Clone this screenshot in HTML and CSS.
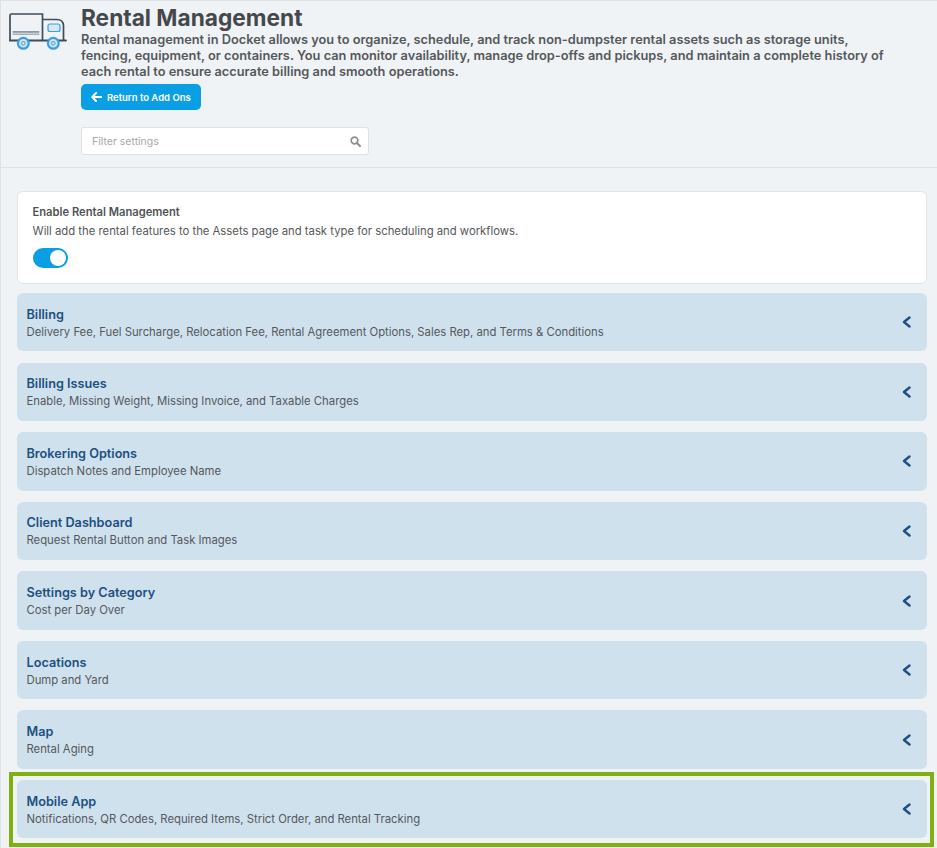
FILE: index.html
```html
<!DOCTYPE html>
<html lang="en">

<head>
  <meta charset="UTF-8" />
  <meta name="viewport" content="width=device-width, initial-scale=1.0" />
  <title>Rental Management</title>
  <link rel="stylesheet" href="styles.css">
</head>

<body>
  <header class="page-header">
    <svg class="truck-icon" width="58" height="40" viewBox="0 0 58 40" fill="none">
      <path d="M1 27V2.500a1.500 1.500 0 0 1 1.500-1.500H33.500V27" stroke="#3f4d5c" stroke-width="1.700" />
      <rect x="3.700" y="18" width="26.600" height="1.800" fill="#8b98a5" />
      <rect x="3.700" y="20.500" width="26.600" height="1.500" fill="#a3aeb8" />
      <path d="M0.500 27.500H57" stroke="#3f4d5c" stroke-width="1.800" stroke-linecap="round" />
      <path d="M33.500 6.500H48q6 0 6.500 6V27" stroke="#3f4d5c" stroke-width="1.700" />
      <rect x="39" y="11" width="12" height="7.500" rx="2" fill="#d5e9f8" stroke="#3b9fe0" stroke-width="1.200" />
      <circle cx="14.300" cy="30.300" r="5.400" fill="#cfe5f5" stroke="#3b9fe0" stroke-width="2.200" />
      <circle cx="14.300" cy="30.300" r="1.800" fill="none" stroke="#3b9fe0" stroke-width="1" />
      <circle cx="44.300" cy="30.300" r="5.400" fill="#cfe5f5" stroke="#3b9fe0" stroke-width="2.200" />
      <circle cx="44.300" cy="30.300" r="1.800" fill="none" stroke="#3b9fe0" stroke-width="1" />
    </svg>
    <div class="header-body">
      <h1>Rental Management</h1>
      <p class="intro">Rental management in Docket allows you to organize, schedule, and track non-dumpster rental assets such as storage units, fencing, equipment, or containers. You can monitor availability, manage drop-offs and pickups, and maintain a complete history of each rental to ensure accurate billing and smooth operations.</p>
      <a class="back-btn" href="#">
        <svg width="11" height="10" viewBox="0 0 11 10" fill="none">
          <path d="M5 1 1.300 5 5 9M1.500 5H10.500" stroke="#fff" stroke-width="2" stroke-linecap="round" stroke-linejoin="round" />
        </svg>
        Return to Add Ons
      </a>
      <div class="filter">
        <input type="text" placeholder="Filter settings" />
        <svg width="11" height="11" viewBox="0 0 11 11" fill="none">
          <circle cx="4.500" cy="4.500" r="3.300" stroke="#8a8f94" stroke-width="1.700" />
          <path d="M7 7 10 10" stroke="#8a8f94" stroke-width="2" stroke-linecap="round" />
        </svg>
      </div>
    </div>
  </header>

  <main class="settings">
    <section class="enable-card">
      <h2>Enable Rental Management</h2>
      <p>Will add the rental features to the Assets page and task type for scheduling and workflows.</p>
      <span class="toggle"><span class="knob"></span></span>
    </section>

    <div class="row">
      <div>
        <h3>Billing</h3>
        <p>Delivery Fee, Fuel Surcharge, Relocation Fee, Rental Agreement Options, Sales Rep, and Terms &amp; Conditions</p>
      </div>
      <svg class="chevron" width="9" height="12" viewBox="0 0 9 12" fill="none"><path d="M7.500 1.500 2 6l5.500 4.500" stroke="#1d5080" stroke-width="2.400" stroke-linecap="round" stroke-linejoin="round" /></svg>
    </div>
    <div class="row">
      <div>
        <h3>Billing Issues</h3>
        <p>Enable, Missing Weight, Missing Invoice, and Taxable Charges</p>
      </div>
      <svg class="chevron" width="9" height="12" viewBox="0 0 9 12" fill="none"><path d="M7.500 1.500 2 6l5.500 4.500" stroke="#1d5080" stroke-width="2.400" stroke-linecap="round" stroke-linejoin="round" /></svg>
    </div>
    <div class="row">
      <div>
        <h3>Brokering Options</h3>
        <p>Dispatch Notes and Employee Name</p>
      </div>
      <svg class="chevron" width="9" height="12" viewBox="0 0 9 12" fill="none"><path d="M7.500 1.500 2 6l5.500 4.500" stroke="#1d5080" stroke-width="2.400" stroke-linecap="round" stroke-linejoin="round" /></svg>
    </div>
    <div class="row">
      <div>
        <h3>Client Dashboard</h3>
        <p>Request Rental Button and Task Images</p>
      </div>
      <svg class="chevron" width="9" height="12" viewBox="0 0 9 12" fill="none"><path d="M7.500 1.500 2 6l5.500 4.500" stroke="#1d5080" stroke-width="2.400" stroke-linecap="round" stroke-linejoin="round" /></svg>
    </div>
    <div class="row">
      <div>
        <h3>Settings by Category</h3>
        <p>Cost per Day Over</p>
      </div>
      <svg class="chevron" width="9" height="12" viewBox="0 0 9 12" fill="none"><path d="M7.500 1.500 2 6l5.500 4.500" stroke="#1d5080" stroke-width="2.400" stroke-linecap="round" stroke-linejoin="round" /></svg>
    </div>
    <div class="row">
      <div>
        <h3>Locations</h3>
        <p>Dump and Yard</p>
      </div>
      <svg class="chevron" width="9" height="12" viewBox="0 0 9 12" fill="none"><path d="M7.500 1.500 2 6l5.500 4.500" stroke="#1d5080" stroke-width="2.400" stroke-linecap="round" stroke-linejoin="round" /></svg>
    </div>
    <div class="row">
      <div>
        <h3>Map</h3>
        <p>Rental Aging</p>
      </div>
      <svg class="chevron" width="9" height="12" viewBox="0 0 9 12" fill="none"><path d="M7.500 1.500 2 6l5.500 4.500" stroke="#1d5080" stroke-width="2.400" stroke-linecap="round" stroke-linejoin="round" /></svg>
    </div>
    <div class="row highlighted">
      <div>
        <h3>Mobile App</h3>
        <p>Notifications, QR Codes, Required Items, Strict Order, and Rental Tracking</p>
      </div>
      <svg class="chevron" width="9" height="12" viewBox="0 0 9 12" fill="none"><path d="M7.500 1.500 2 6l5.500 4.500" stroke="#1d5080" stroke-width="2.400" stroke-linecap="round" stroke-linejoin="round" /></svg>
    </div>
  </main>
</body>

</html>
```

FILE: styles.css
```css
/* Page */
html,
body {
  height: 848px;
  overflow: hidden;
}

body {
  margin: 0;
  font-family: Inter, "Noto Sans", sans-serif;
  background-color: #eff3f6;
  color: #4a4d50;
  border-left: 1px solid #dfe3e6;
  border-top: 1px solid #dfe3e6;
  box-sizing: border-box;
}

/* Header */
.page-header {
  display: flex;
  height: 166px;
  padding-left: 8px;
  border-bottom: 1px solid #dde1e4;
  box-sizing: content-box;
}

.truck-icon {
  flex: none;
  margin-top: 12px;
}

.header-body {
  margin-left: 14px;
}

h1 {
  margin: 3px 0 0;
  font-size: 22.700px;
  line-height: 27px;
  font-weight: 700;
  color: #45484b;
}

.intro {
  margin: 1px 0 0;
  width: 815px;
  font-size: 12.800px;
  line-height: 16px;
  font-weight: 600;
  color: #55585b;
}

.back-btn {
  display: inline-flex;
  align-items: center;
  gap: 5px;
  height: 26px;
  width: 120px;
  margin-top: 4px;
  padding-left: 10px;
  box-sizing: border-box;
  border-radius: 5px;
  background-color: #0a9ee4;
  color: #fff;
  font-size: 9.500px;
  font-weight: 600;
  text-decoration: none;
}

.filter {
  display: flex;
  align-items: center;
  width: 288px;
  height: 28px;
  margin-top: 17px;
  padding: 0 7px 0 10px;
  box-sizing: border-box;
  background-color: #fff;
  border: 1px solid #dfe2e5;
  border-radius: 3px;
}

.filter input {
  flex: 1;
  min-width: 0;
  border: none;
  outline: none;
  padding: 0;
  font-family: inherit;
  font-size: 10.500px;
}

.filter input::placeholder {
  color: #a6a9ac;
}

/* Settings list */
.settings {
  position: relative;
  padding: 23px 10px 0 16px;
}

.enable-card {
  height: 93px;
  margin-bottom: 9px;
  padding: 13px 14.500px 0;
  box-sizing: border-box;
  background-color: #fff;
  border: 1px solid #e2e6e9;
  border-radius: 6px;
}

.enable-card h2 {
  margin: 0;
  font-size: 11.200px;
  line-height: 14px;
  font-weight: 600;
  color: #505356;
}

.enable-card p {
  margin: 5px 0 0;
  font-size: 11.300px;
  line-height: 14px;
  color: #55585b;
}

.toggle {
  display: block;
  position: relative;
  width: 35px;
  height: 20px;
  margin-top: 10px;
  border-radius: 10px;
  background-color: #0a9ee4;
}

.knob {
  position: absolute;
  top: 2px;
  right: 2px;
  width: 16px;
  height: 16px;
  border-radius: 50%;
  background-color: #fff;
}

.row {
  display: flex;
  align-items: center;
  justify-content: space-between;
  height: 58.400px;
  margin-bottom: 11.200px;
  padding: 0 16.500px 0 9.500px;
  box-sizing: border-box;
  background-color: #d0e1ee;
  border-radius: 6px;
}

.row h3 {
  margin: 0;
  padding-top: 1px;
  font-size: 12.700px;
  line-height: 16px;
  font-weight: 600;
  color: #1d5080;
}

.row p {
  margin: 2px 0 0;
  font-size: 11.300px;
  line-height: 14px;
  color: #53585d;
}

/* Green callout drawn over the last row */
.highlighted {
  position: relative;
}

.highlighted::after {
  content: "";
  position: absolute;
  top: -8px;
  right: -7px;
  bottom: -8.600px;
  left: -8px;
  border: 4px solid #7fb00f;
  pointer-events: none;
}
```
